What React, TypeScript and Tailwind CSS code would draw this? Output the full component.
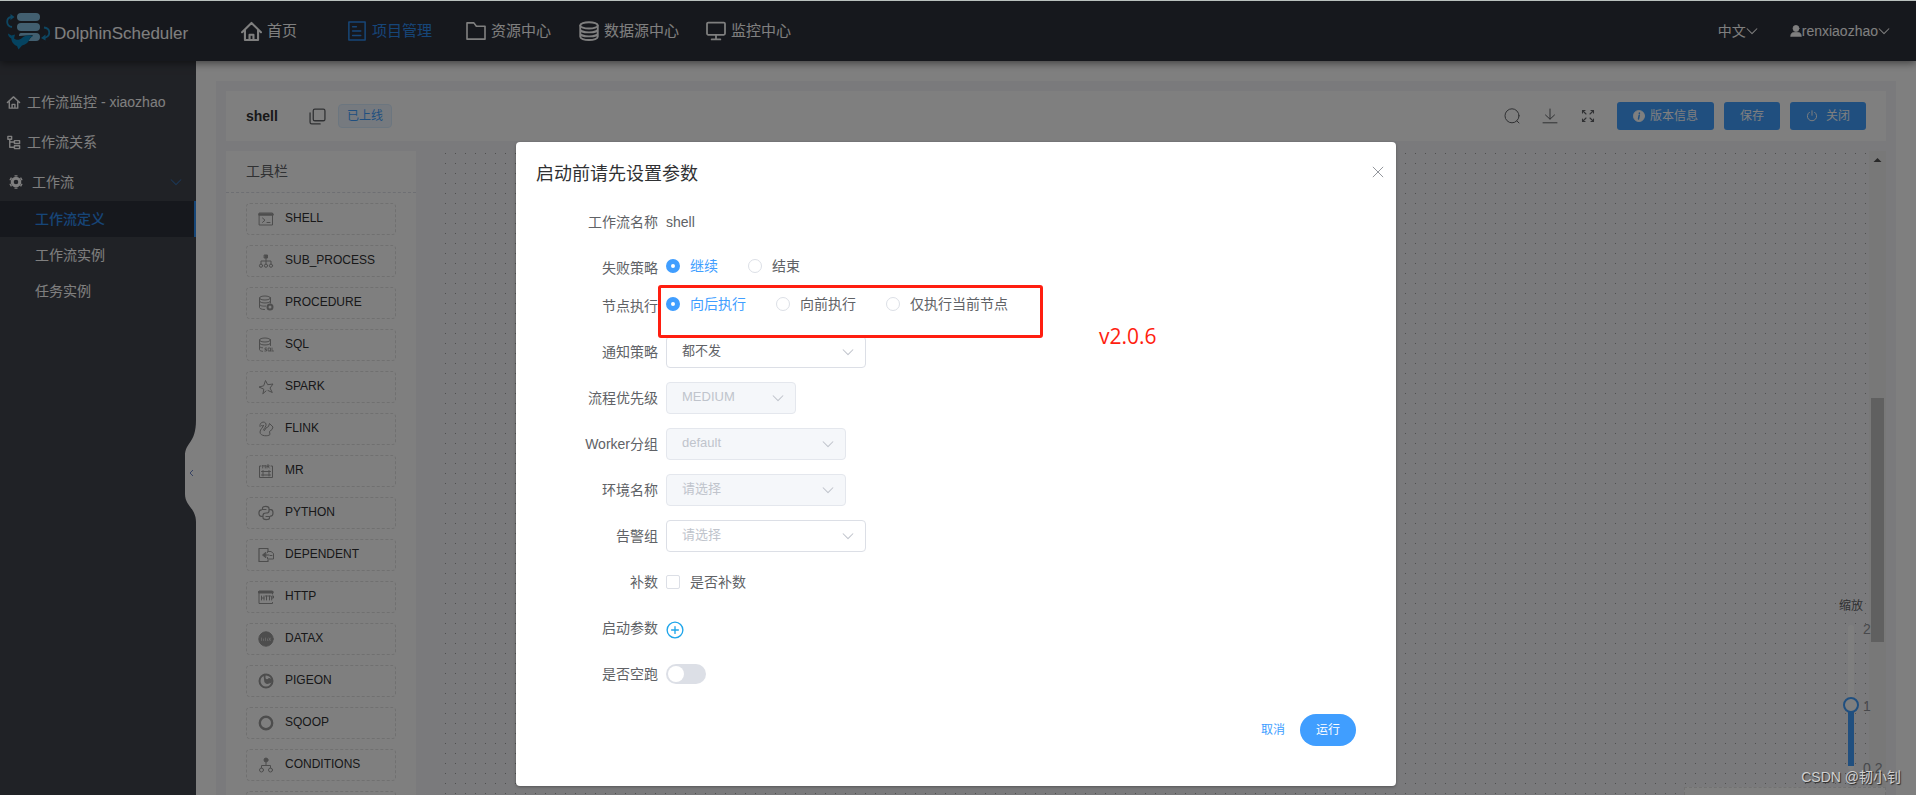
import React from 'react';

interface IconProps {
  className?: string;
  children?: React.ReactNode;
}

const Icon: React.FC<IconProps> = ({ className = 'size-4', children }) => (
  <svg
    viewBox="0 0 16 16"
    fill="none"
    stroke="currentColor"
    strokeLinecap="round"
    strokeLinejoin="round"
    className={`shrink-0 ${className}`}
    aria-hidden="true"
  >
    {children}
  </svg>
);

const ChevronDown = ({ className = 'size-3' }: IconProps) => (
  <Icon className={className}>
    <path d="M1.500 5l6.500 6.500L14.500 5" strokeWidth="1.400" />
  </Icon>
);

const Logo = () => (
  <svg viewBox="0 0 44 38" className="h-[38px] w-11 shrink-0" aria-hidden="true">
    <g fill="#84bfe0">
      <rect x="11" y="1" width="23" height="8" rx="4" />
      <rect x="11" y="11" width="23" height="8" rx="4" />
      <path d="M15 21h15a4 4 0 0 1 0 8h-8l5-6-14 1q0-3 2-3z" />
    </g>
    <g fill="none" stroke="#1b8cc4" strokeWidth="1.800">
      <path d="M6 15C-.5 14 0 6 5 5" />
      <path d="M38 15.500c7 1 7 9 0 10.500" />
    </g>
    <path d="M4.500 2l4 3-4 3zM39.500 22.500l-4.500 3.500 4.500 2.500z" fill="#1b8cc4" />
    <path
      d="M2 21.500l3.500 2 3.500-1-1 4c3 2.500 6 1 8-.5 3-3 7-3.500 11-2-1 1-2 1-3 2-1 4-4 6.500-8 7.500l-3.500 4-1.500-3.500C8 33 5.500 30 5.300 26.500c-2-1-3.300-3-3.300-5z"
      fill="#0b86c0"
    />
  </svg>
);

const navItems = [
  {
    label: '首页',
    width: 'w-[106px]',
    icon: (
      <Icon className="size-[21px]">
        <path d="M.8 8.500L8 1.500l7.200 7M3 7v7.500h10V7M6.500 14.500v-4h3v4" strokeWidth="1.600" />
      </Icon>
    ),
  },
  {
    label: '项目管理',
    width: 'w-[119px]',
    active: true,
    icon: (
      <Icon className="size-5">
        <path d="M1.500 .8h13v14.400h-13zM4.500 4.500h3M4.500 8h6.500M4.500 11.500h6.500" strokeWidth="1.200" />
      </Icon>
    ),
  },
  {
    label: '资源中心',
    width: 'w-[113px]',
    icon: (
      <Icon className="size-5">
        <path d="M.8 1.500h5.500l2 2.700h6.900v10.300H.8z" strokeWidth="1.300" />
      </Icon>
    ),
  },
  {
    label: '数据源中心',
    width: 'w-[127px]',
    icon: (
      <Icon className="size-5">
        <ellipse cx="8" cy="3.500" rx="7" ry="2.500" strokeWidth="1.500" />
        <path
          d="M1 3.500v9C1 14 4 15.200 8 15.200s7-1.200 7-2.700v-9M1 6.500c0 1.500 3 2.600 7 2.600s7-1.100 7-2.600M1 9.700c0 1.500 3 2.600 7 2.600s7-1.100 7-2.600"
          strokeWidth="1.500"
        />
      </Icon>
    ),
  },
  {
    label: '监控中心',
    width: 'w-[106px]',
    icon: (
      <Icon className="size-5">
        <rect x=".8" y="1.200" width="14.400" height="9.800" rx="1" strokeWidth="1.400" />
        <path d="M8 11v3.500M4.500 14.700h7" strokeWidth="1.400" />
      </Icon>
    ),
  },
];

const tasks = [
  {
    name: 'SHELL',
    icon: (
      <>
        <rect x="1.500" y="2" width="13" height="12" />
        <path d="M1.500 3.500h13" strokeWidth="2.500" />
        <path d="M4.500 7l2.500 2.200-2.500 2.200M9 11.500h3" />
      </>
    ),
  },
  {
    name: 'SUB_PROCESS',
    icon: (
      <>
        <rect x="6.500" y="2" width="3" height="3" fill="currentColor" />
        <path d="M8 5v6M3 11V8h10v3" />
        <circle cx="3" cy="12.700" r="1.600" />
        <circle cx="8" cy="12.700" r="1.600" />
        <circle cx="13" cy="12.700" r="1.600" />
      </>
    ),
  },
  {
    name: 'PROCEDURE',
    icon: (
      <>
        <ellipse cx="7" cy="3" rx="5.500" ry="2" />
        <path d="M1.500 3v9.500c0 1 2 2 5 2M12.500 3v5M1.500 6.200c0 2.500 11 2.500 11 0M1.500 9.300c0 1.500 3 2 6 1.800" />
        <circle cx="12" cy="12" r="2.500" strokeWidth="2" />
      </>
    ),
  },
  {
    name: 'SQL',
    icon: (
      <>
        <ellipse cx="7" cy="3" rx="5.500" ry="2" />
        <path d="M1.500 3v9.500c0 1 1 1.500 3 1.800M12.500 3v5.500M1.500 6.200c0 2.500 11 2.500 11 0M1.500 9.300c0 .8 1 1.300 3 1.500" />
        <path d="M8.500 11H7v1.500h1.500V14H6.800M10.500 11h2v3h-2zM12 13.500l1 1M14 11v3h1.500" strokeWidth=".9" />
      </>
    ),
  },
  {
    name: 'SPARK',
    icon: (
      <path d="M5 14.500l.8-4.300L1 8l4.700-1.200L7.500 1.500l2.200 4.200L15 5l-3 4 2.300 4.500L10 11.500M8 12l-3 2.500" />
    ),
  },
  {
    name: 'FLINK',
    icon: (
      <path d="M3.500 4.500c.5 1.200 2 .8 2-.5 0 2.500-3.500 4-3.500 7 0 4.500 8.500 4.500 10 2.500l-.5-3L14 8.500 15 6l-3.500-3.500-1 3L8 7 6.500 9.500M2 5.500C1 1 7-.5 8 3c.6 2.500-2 4-2.500 6" />
    ),
  },
  {
    name: 'MR',
    icon: (
      <>
        <path d="M3 3H1.500v11.500h13V3H13M5 7.500V13M11 7.500V13M3.500 8.500h9M3.500 12h9" />
        <path d="M4.700 5V2l1.300 1.500L7.300 2v3M9 5V2h2v1.500H9M10 3.500L11.300 5" strokeWidth=".9" />
      </>
    ),
  },
  {
    name: 'PYTHON',
    icon: (
      <path
        d="M8 4.500H4.500V3c0-2 6.500-2.500 6.500.5v2.700C11 8 9 8 8 8c-2 0-3 .5-3 2.500v.8H3C.5 11-.2 5 3.500 4.800M8 11.500h3.500V13c0 2-6.500 2.500-6.500-.5v-2M11 4.700h2c2.500.3 3 6.300-.5 6.500"
        strokeWidth="1.200"
      />
    ),
  },
  {
    name: 'DEPENDENT',
    icon: (
      <>
        <path d="M10 4V1.500H1v13h9V13" strokeWidth="1.200" />
        <path d="M7.500 5.500L4.500 8l3 2.500zM7.500 8H11" fill="currentColor" />
        <path d="M9.500 5.500v-1H13l2.500 2V12H9.500v-1.500M12 8.500h2" />
      </>
    ),
  },
  {
    name: 'HTTP',
    icon: (
      <>
        <path d="M14.500 5V2H1v12.500h13.500v-1" />
        <path d="M1 3.200h13.500" strokeWidth="2.500" />
        <path d="M3.500 7v4M6 7v4M3.500 9H6M7.500 7h2M8.500 7v4M10.500 7h2M11.500 7v4M13.700 11V7h1.800v2h-1.800" />
      </>
    ),
  },
  {
    name: 'DATAX',
    icon: (
      <>
        <circle cx="8" cy="8" r="7.200" fill="currentColor" />
        <path
          d="M3.500 7v2.500M5.500 9.500v-1.500M7.500 7v2.500M9.500 8v1.500M11 7l1.500 2.500M12.500 7L11 9.500"
          stroke="#fff"
          strokeWidth=".5"
        />
      </>
    ),
  },
  {
    name: 'PIGEON',
    icon: (
      <>
        <circle cx="8" cy="8" r="6.500" strokeWidth="2" />
        <path d="M7 1.500v4l2 1.500 2-1.500 3 1-1 3-4 1L7 9.500 6 2z" fill="currentColor" />
      </>
    ),
  },
  {
    name: 'SQOOP',
    icon: <circle cx="8" cy="8" r="6.200" strokeWidth="2.400" />,
  },
  {
    name: 'CONDITIONS',
    icon: (
      <>
        <circle cx="8" cy="3" r="2" fill="currentColor" />
        <path d="M8 5v3M3.500 11V8.500h9V11" />
        <circle cx="3.500" cy="13" r="2" />
        <circle cx="12.500" cy="13" r="2" />
      </>
    ),
  },
];

const Header = () => (
  <header className="relative z-10 flex h-[60px] shrink-0 items-center bg-[#2d303a] text-white shadow-[0_2px_8px_rgba(0,0,0,0.5)]">
    <a href="#home" className="flex w-[241px] items-center gap-1 pl-1.5 text-[17px]">
      <Logo />
      <span className="pt-1.5">DolphinScheduler</span>
    </a>
    <nav className="flex flex-1 items-center text-[15px]">
      {navItems.map((item) => (
        <div key={item.label} className={item.width}>
          <a
            href="#nav"
            className={`flex items-center gap-[5px] whitespace-nowrap ${item.active ? 'text-[#2d8cf0]' : ''}`}
          >
            {item.icon}
            {item.label}
          </a>
        </div>
      ))}
    </nav>
    <div className="flex items-center gap-8 pr-[26px] text-sm">
      <button className="flex items-center">
        中文
        <ChevronDown />
      </button>
      <button className="flex items-center">
        <Icon className="size-3">
          <circle cx="8" cy="4.500" r="4" fill="currentColor" />
          <path d="M1 15c0-4 2-5.500 7-5.500s7 1.500 7 5.500z" fill="currentColor" />
        </Icon>
        renxiaozhao
        <ChevronDown />
      </button>
    </div>
  </header>
);

const Sidebar = () => (
  <aside className="relative w-[196px] shrink-0 bg-[#41444c] pt-5 text-sm text-white">
    <a href="#monitor" className="flex h-10 items-center gap-1.5 pl-1.5 pt-0.5">
      <Icon className="size-[15px]">
        <path d="M1.500 8L8 2l6.500 6M3.500 7v7h9V7M6.500 13.500V10h3v3.500" strokeWidth="1.500" />
      </Icon>
      工作流监控 - xiaozhao
    </a>
    <a href="#relation" className="flex h-10 items-center gap-1.5 pl-1.5 pt-0.5">
      <Icon className="size-[15px]">
        <path d="M2 1.500h4v3H2zM4 4.500v8.500h4.500M4 7.500h4.500M9 6h5.500v3H9zM9 11.500h5.500v3H9z" strokeWidth="1.500" />
      </Icon>
      工作流关系
    </a>
    <button className="flex h-10 w-full items-center gap-2 pl-2 pr-3.5 pt-0.5">
      <Icon className="size-4">
        <circle cx="8" cy="8" r="3.800" strokeWidth="3" />
        <path
          d="M8 1.200v1.300M8 13.500v1.300M2.100 4.600l1.200.7M12.700 10.700l1.200.7M2.100 11.400l1.200-.7M12.700 5.300l1.200-.7"
          strokeWidth="3"
          strokeLinecap="butt"
        />
      </Icon>
      工作流
      <ChevronDown className="ml-auto size-3 text-[#2d8cf0] opacity-60" />
    </button>
    <a
      href="#definition"
      className="flex h-9 items-center border-r-2 border-[#2d8cf0] bg-[#2d303a] pl-[35px] font-medium text-[#2d8cf0]"
    >
      工作流定义
    </a>
    <a href="#instance" className="flex h-9 items-center pl-[35px]">
      工作流实例
    </a>
    <a href="#task" className="flex h-9 items-center pl-[35px]">
      任务实例
    </a>
    <button aria-label="collapse" className="absolute right-0 top-[359px]">
      <svg viewBox="0 0 11 102" className="h-[102px] w-[11px]" aria-hidden="true">
        <path d="M11 0C11 24 0 22 0 36v38c0 12 11 14 11 28z" fill="#fff" />
        <path d="M8 50l-3 3 3 3" fill="none" stroke="#6f86c8" />
      </svg>
    </button>
  </aside>
);

const Toolbar = () => (
  <div className="flex h-[50px] shrink-0 items-center bg-white px-5">
    <h1 className="w-[63px] text-sm font-bold text-[#303133]">shell</h1>
    <button aria-label="copy" className="mr-3 text-[#606266]">
      <Icon className="size-[17px]">
        <rect x="4" y="1" width="11" height="11" rx="1.500" strokeWidth="1.200" />
        <path d="M1 4.500v9a1.500 1.500 0 0 0 1.500 1.500h8" strokeWidth="1.200" />
      </Icon>
    </button>
    <span className="flex h-6 items-center rounded border border-[#d9ecff] bg-[#ecf5ff] px-2 text-xs text-[#409eff]">
      已上线
    </span>
    <div className="ml-auto flex items-center gap-[22px] text-[#606266]">
      <button aria-label="search">
        <Icon className="size-4">
          <circle cx="8" cy="7.800" r="7" />
          <path d="M13 13l2 2" />
        </Icon>
      </button>
      <button aria-label="download">
        <Icon className="size-4">
          <path d="M8 1v10M3.500 7L8 11.200 12.500 7M1 14.800h14" />
        </Icon>
      </button>
      <button aria-label="full screen">
        <Icon className="size-4">
          <path
            d="M2.500 5V2.500H5M2.500 2.500L6 6M11 2.500h2.500V5M13.500 2.500L10 6M2.500 11v2.500H5M2.500 13.500L6 10M13.500 11v2.500H11M13.500 13.500L10 10"
            strokeWidth="1.100"
          />
        </Icon>
      </button>
    </div>
    <div className="ml-[21px] flex gap-2.5 text-xs text-white">
      <button className="flex h-7 items-center gap-[5px] rounded-[3px] bg-[#409eff] px-4">
        <Icon className="size-3">
          <circle cx="8" cy="8" r="7.500" fill="currentColor" />
          <path d="M8.500 4v.5M8.300 7L7.300 12" stroke="#409eff" strokeWidth="2" />
        </Icon>
        版本信息
      </button>
      <button className="flex h-7 items-center rounded-[3px] bg-[#409eff] px-4">保存</button>
      <button className="flex h-7 items-center gap-2 rounded-[3px] bg-[#409eff] px-4">
        <Icon className="size-3">
          <path d="M8 1v6M4.500 3a6.200 6.200 0 1 0 7 0" strokeWidth="1.300" />
        </Icon>
        关闭
      </button>
    </div>
  </div>
);

const TaskPanel = () => (
  <div className="w-[190px] shrink-0 overflow-hidden bg-white">
    <h2 className="flex h-[42px] items-center border-b border-dashed border-[#dcdfe6] px-5 pb-0.5 text-sm text-[#606266]">
      工具栏
    </h2>
    <ul className="flex flex-col gap-2.5 px-5 pt-2.5">
      {tasks.map((task) => (
        <li
          key={task.name}
          className="flex h-8 shrink-0 items-center gap-[11px] rounded border border-dashed border-[#e0e0e0] pl-[11px] text-xs text-[#303133]"
        >
          <Icon className="size-4 text-[#9a9a9a]">{task.icon}</Icon>
          <span className="pb-0.5">{task.name}</span>
        </li>
      ))}
      <li className="h-8 shrink-0 rounded border border-dashed border-[#e0e0e0]" />
    </ul>
  </div>
);

const Canvas = () => (
  <div className="relative flex flex-1 pl-[29px] pt-0.5">
    <div className="flex-1 bg-[conic-gradient(at_1px_1px,transparent_75%,#a0a0a0_0)] bg-[size:10px_10px]" />
    <div className="relative -mt-0.5 w-[17px] bg-[#f1f1f1]">
      <svg viewBox="0 0 17 17" className="size-[17px]" aria-hidden="true">
        <path d="M4.500 11l4-4 4 4z" fill="#505050" />
      </svg>
      <div className="absolute inset-x-0.5 top-[247px] h-[244px] bg-[#c1c1c1]" />
    </div>
    <div className="absolute right-[23px] top-[447px] flex flex-col items-center gap-[11px] text-sm text-[#909399]">
      <label htmlFor="zoom" className="text-xs leading-4 text-[#606266]">
        缩放
      </label>
      <div className="relative h-[145px] w-1.5">
        <input
          id="zoom"
          type="range"
          min="0.2"
          max="2"
          step="0.1"
          defaultValue="1"
          className="block h-full w-1.5 appearance-none rounded-full bg-[linear-gradient(to_top,#fff_3%,#409eff_3%,#409eff_43%,#fff_43%)] [direction:rtl] [writing-mode:vertical-lr] [&::-webkit-slider-thumb]:size-4 [&::-webkit-slider-thumb]:appearance-none [&::-webkit-slider-thumb]:rounded-full [&::-webkit-slider-thumb]:border-2 [&::-webkit-slider-thumb]:border-solid [&::-webkit-slider-thumb]:border-[#409eff] [&::-webkit-slider-thumb]:bg-white"
        />
        <span className="absolute -top-1.5 left-[15px] leading-5">2</span>
        <span className="absolute left-[15px] top-[71px] leading-5">1</span>
        <span className="absolute -bottom-2 left-[15px] leading-5">0.2</span>
      </div>
    </div>
    <div className="absolute bottom-0 right-0 h-2 w-[202px] border border-b-0 border-dashed border-[#e4e4e4] bg-white" />
  </div>
);

interface RowProps {
  label: string;
  htmlFor?: string;
  children: React.ReactNode;
}

const Row: React.FC<RowProps> = ({ label, htmlFor, children }) => (
  <div className="flex h-8 items-start gap-2">
    <label htmlFor={htmlFor} className="w-[122px] text-right leading-8">
      {label}
    </label>
    {children}
  </div>
);

const RadioGroup = ({ name, options }: { name: string; options: string[] }) => (
  <div className="flex h-7 items-center gap-[30px]">
    {options.map((option, i) => (
      <label key={option} className={`flex items-center gap-2.5 ${i === 0 ? 'text-[#409eff]' : ''}`}>
        <input
          type="radio"
          name={name}
          defaultChecked={i === 0}
          className="size-3.5 appearance-none rounded-full border border-[#dcdfe6] bg-white checked:border-[5px] checked:border-[#409eff]"
        />
        {option}
      </label>
    ))}
  </div>
);

interface SelectProps {
  id: string;
  value: string;
  width: string;
  disabled?: boolean;
  placeholder?: boolean;
}

const Select: React.FC<SelectProps> = ({ id, value, width, disabled = false, placeholder = false }) => (
  <div className={`relative ${width}`}>
    <select
      id={id}
      disabled={disabled}
      className={`h-8 w-full appearance-none rounded border pb-0.5 pl-[15px] pr-8 text-[13px] opacity-100 ${
        disabled ? 'border-[#e4e7ed] bg-[#f5f7fa]' : 'border-[#dcdfe6] bg-white'
      } ${disabled || placeholder ? 'text-[#c0c4cc]' : 'text-[#606266]'}`}
    >
      <option>{value}</option>
    </select>
    <ChevronDown className="pointer-events-none absolute right-3 top-2.5 size-3 text-[#c0c4cc]" />
  </div>
);

const StartDialog = () => (
  <div
    role="dialog"
    aria-labelledby="dialog-title"
    className="relative w-[880px] rounded-sm bg-white pb-10 text-sm text-[#606266] shadow-[0_1px_3px_rgba(0,0,0,0.3)]"
  >
    <div className="flex h-16 items-center justify-between pl-5 pr-3">
      <h2 id="dialog-title" className="text-lg text-[#303133]">
        启动前请先设置参数
      </h2>
      <button aria-label="close" className="pb-1 text-[#909399]">
        <Icon className="size-3">
          <path d="M1.500 1.500l13 13M14.500 1.500l-13 13" strokeWidth="1.300" />
        </Icon>
      </button>
    </div>
    <form className="flex flex-col gap-3.5 pl-5">
      <Row label="工作流名称">
        <span className="leading-8">shell</span>
      </Row>
      <div className="flex flex-col gap-1.5">
        <Row label="失败策略">
          <RadioGroup name="failure" options={['继续', '结束']} />
        </Row>
        <Row label="节点执行">
          <RadioGroup name="node" options={['向后执行', '向前执行', '仅执行当前节点']} />
        </Row>
      </div>
      <Row label="通知策略" htmlFor="notify">
        <Select id="notify" value="都不发" width="w-[200px]" />
      </Row>
      <Row label="流程优先级" htmlFor="priority">
        <Select id="priority" value="MEDIUM" width="w-[130px]" disabled />
      </Row>
      <Row label="Worker分组" htmlFor="worker">
        <Select id="worker" value="default" width="w-[180px]" disabled />
      </Row>
      <Row label="环境名称" htmlFor="env">
        <Select id="env" value="请选择" width="w-[180px]" disabled />
      </Row>
      <Row label="告警组" htmlFor="alert">
        <Select id="alert" value="请选择" width="w-[200px]" placeholder />
      </Row>
      <Row label="补数">
        <label className="flex h-8 items-center gap-2.5">
          <input type="checkbox" className="size-3.5 appearance-none rounded-xs border border-[#dcdfe6] bg-white" />
          是否补数
        </label>
      </Row>
      <Row label="启动参数">
        <button type="button" aria-label="add" className="flex h-9 items-center text-[#1ea5ea]">
          <Icon className="size-[18px]">
            <circle cx="8" cy="8" r="7" strokeWidth="1.200" />
            <path d="M8 5v6M5 8h6" strokeWidth="1.200" />
          </Icon>
        </button>
      </Row>
      <Row label="是否空跑" htmlFor="dry-run">
        <span className="flex h-8 items-center">
          <input
            id="dry-run"
            type="checkbox"
            role="switch"
            className="h-5 w-10 appearance-none rounded-full bg-[#dcdfe6] p-0.5 before:block before:size-4 before:rounded-full before:bg-white"
          />
        </span>
      </Row>
    </form>
    <div className="flex items-center justify-end gap-[15px] pr-10 pt-6 text-xs">
      <button className="text-[#409eff]">取消</button>
      <button className="h-8 rounded-full bg-[#409eff] px-4 text-white">运行</button>
    </div>
    <div className="pointer-events-none absolute left-[142px] top-[143px] h-[53px] w-[385px] rounded-[3px] border-3 border-[#ff1e10]" />
    <span className="absolute left-[583px] top-[180px] font-['Open_Sans',sans-serif] text-[21px] leading-7 text-[#ff1e10]">
      v2.0.6
    </span>
  </div>
);

const App: React.FC = () => {
  return (
    <div className="relative flex h-screen flex-col overflow-hidden border-t border-[#b9c0bd] bg-white font-['Liberation_Sans','Noto_Sans_CJK_SC',sans-serif]">
      <Header />
      <div className="flex min-h-0 flex-1">
        <Sidebar />
        <main className="flex min-w-0 flex-1 px-5 pt-5">
          <div className="flex min-w-0 flex-1 flex-col gap-2.5 bg-[#f4f4f8] px-2.5 pt-2.5">
            <Toolbar />
            <div className="flex min-h-0 flex-1">
              <TaskPanel />
              <Canvas />
            </div>
          </div>
        </main>
      </div>

      {/* Modal layer */}
      <div className="absolute inset-0 z-20 flex items-start justify-center bg-black/50 pr-1 pt-[141px]">
        <StartDialog />
      </div>

      <span className="absolute bottom-2 right-[15px] z-30 text-sm text-[#d0d0d0] [text-shadow:1px_1px_1px_rgba(0,0,0,0.7)]">
        CSDN @韧小钊
      </span>
    </div>
  );
};

export default App;
